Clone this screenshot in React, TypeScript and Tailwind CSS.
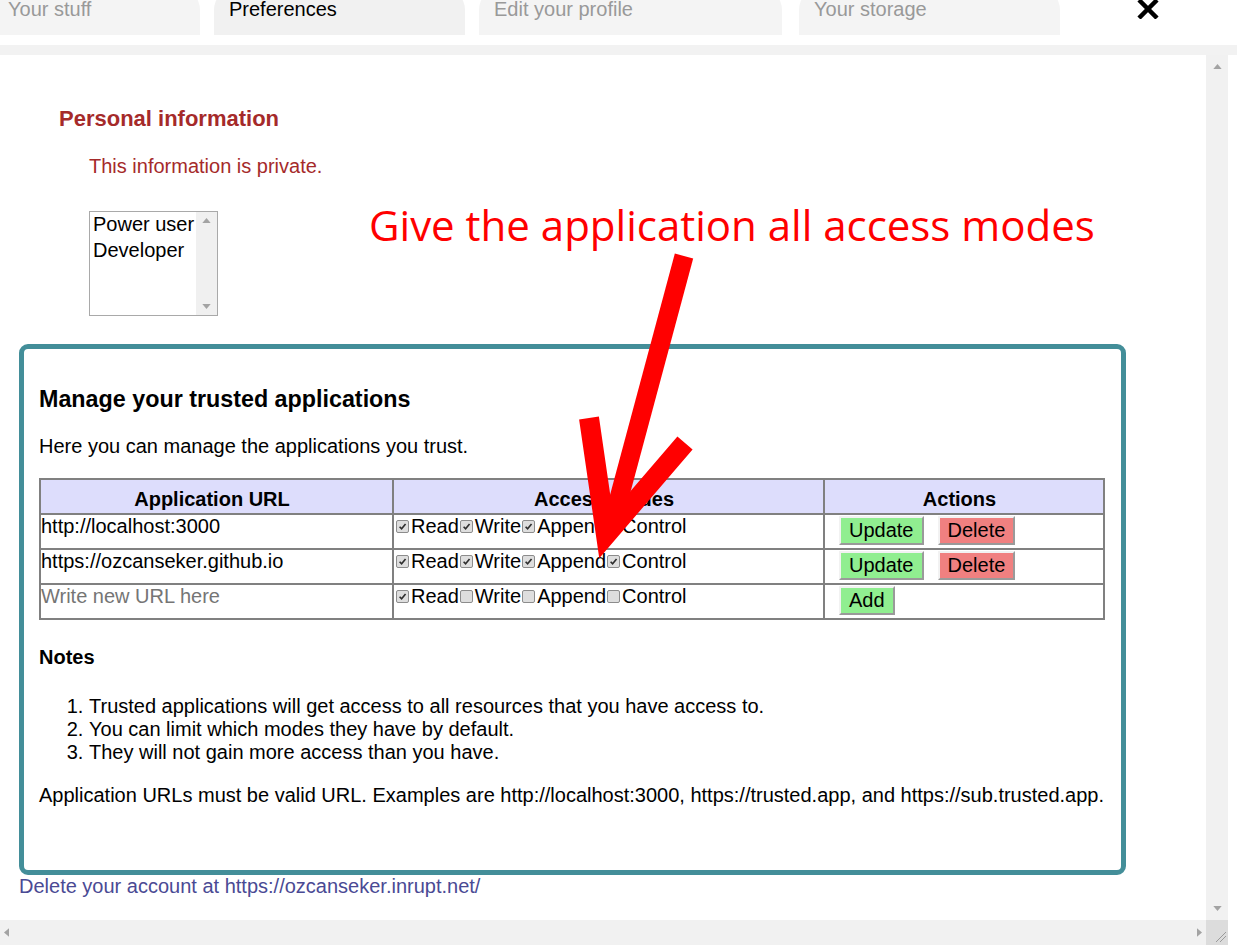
import React from 'react';

const font = { fontFamily: '"Liberation Sans", Arial, sans-serif' };

function Check({ on }: { on: boolean }) {
    return (
        <span className="mr-[2px] inline-flex h-[13px] w-[13px] shrink-0 items-center justify-center rounded-[2px] border border-[#8c8c8c] bg-[#dedede] align-[1px]">
            {on && (
                <svg viewBox="0 0 10 10" className="h-[9px] w-[9px]">
                    <path d="M1.8 5.2 L4 7.6 L8.4 2.2" fill="none" stroke="#2e2e2e" strokeWidth="1.8" />
                </svg>
            )}
        </span>
    );
}

function Btn({ label, color }: { label: string; color: 'green' | 'red' }) {
    return (
        <button
            className={`h-[29px] border-2 border-t-[#f2f2f2] border-l-[#f2f2f2] border-b-[#9a9a9a] border-r-[#9a9a9a] px-[8px] text-[20px] leading-[23px] text-black ${color === 'green' ? 'bg-[#90ee90]' : 'bg-[#f08080]'}`}
        >
            {label}
        </button>
    );
}

function Modes({ modes }: { modes: boolean[] }) {
    const names = ['Read', 'Write', 'Append', 'Control'];
    return (
        <div className="flex items-center pl-[2px]">
            {names.map((n, i) => (
                <span key={n} className="flex items-center">
                    <Check on={modes[i]} />
                    <span className="mr-[1px]">{n}</span>
                </span>
            ))}
        </div>
    );
}

export default function App() {
    const rows = [
        { url: 'http://localhost:3000', modes: [true, true, true, false], existing: true },
        { url: 'https://ozcanseker.github.io', modes: [true, true, true, true], existing: true },
        { url: '', modes: [true, false, false, false], existing: false },
    ];

    return (
        <div className="relative flex h-[945px] w-[1247px] flex-col overflow-hidden bg-white text-black" style={font}>
            {/* tabs */}
            <div className="flex h-[35px] shrink-0 text-[20px] leading-[23px]">
                <div className="-mt-[12px] ml-[-7px] h-[47px] w-[207px] rounded-t-[22px] bg-[#f4f4f4] pl-[15px] pt-[10px] text-[#999]">Your stuff</div>
                <div className="-mt-[12px] ml-[14px] h-[47px] w-[251px] rounded-t-[22px] bg-[#f1f1f1] pl-[15px] pt-[10px] text-black">Preferences</div>
                <div className="-mt-[12px] ml-[14px] h-[47px] w-[303px] rounded-t-[22px] bg-[#f4f4f4] pl-[15px] pt-[10px] text-[#999]">Edit your profile</div>
                <div className="-mt-[12px] ml-[17px] h-[47px] w-[261px] rounded-t-[22px] bg-[#f4f4f4] pl-[15px] pt-[10px] text-[#999]">Your storage</div>
                <svg viewBox="0 0 24 20" className="ml-[76px] -mt-[1px] h-[20px] w-[24px]">
                    <path d="M3 1 L21 19 M21 1 L3 19" stroke="#000" strokeWidth="4.5" />
                </svg>
            </div>

            <div className="mt-[10px] h-[10px] w-[1237px] shrink-0 bg-[#f2f2f2]" />

            {/* frame */}
            <div className="flex h-[865px] shrink-0">
                <div className="h-full w-[1206px] overflow-hidden text-[20px] leading-[23px]">
                    <h3 className="ml-[59px] mt-[51px] text-[22px] font-bold leading-[25px] text-[#a52a2a]">Personal information</h3>
                    <p className="ml-[89px] mt-[24px] text-[#a52a2a]">This information is private.</p>

                    <div className="ml-[89px] mt-[33px] flex h-[105px] w-[129px] border border-[#a9a9a9]">
                        <div className="flex-1 pl-[3px] leading-[26px]">
                            <div className="-mt-[1px]">Power user</div>
                            <div>Developer</div>
                        </div>
                        <div className="flex w-[21px] flex-col items-center justify-between bg-[#f0f0f0] py-[6px]">
                            <svg viewBox="0 0 10 6" className="h-[5px] w-[9px]"><path d="M0 6 L5 0 L10 6 Z" fill="#a3a3a3" /></svg>
                            <svg viewBox="0 0 10 6" className="h-[5px] w-[9px]"><path d="M0 0 L5 6 L10 0 Z" fill="#a3a3a3" /></svg>
                        </div>
                    </div>

                    <div className="ml-[19px] mt-[28px] h-[531px] w-[1107px] rounded-[9px] border-[5px] border-[#438e99] pl-[15px] pt-[37px]">
                        <h2 className="text-[23.3px] font-bold leading-[26px]">Manage your trusted applications</h2>
                        <p className="mt-[22.5px]">Here you can manage the applications you trust.</p>

                        <div className="mt-[20.5px] w-[1066px] border-2 border-[#808080]">
                            <div className="flex h-[33px] bg-[#ddddfc] font-bold">
                                <div className="flex w-[353px] items-end justify-center border-r-2 border-[#808080] pb-[2px] pr-[9px]">Application URL</div>
                                <div className="flex w-[431px] items-end justify-center border-r-2 border-[#808080] pb-[2px] pr-[9px]">Access modes</div>
                                <div className="flex flex-1 items-end justify-center pb-[2px] pr-[9px]">Actions</div>
                            </div>
                            {rows.map((r, i) => (
                                <div key={i} className="flex h-[35px] border-t-2 border-[#808080]">
                                    <div className="w-[353px] border-r-2 border-[#808080] pl-[0px]">
                                        {r.existing ? r.url : <span className="text-[#757575]">Write new URL here</span>}
                                    </div>
                                    <div className="w-[431px] border-r-2 border-[#808080]">
                                        <Modes modes={r.modes} />
                                    </div>
                                    <div className="flex flex-1 items-start gap-[14px] pl-[14px] pt-[1px]">
                                        {r.existing ? (
                                            <>
                                                <Btn label="Update" color="green" />
                                                <Btn label="Delete" color="red" />
                                            </>
                                        ) : (
                                            <Btn label="Add" color="green" />
                                        )}
                                    </div>
                                </div>
                            ))}
                        </div>

                        <h4 className="mt-[25.5px] font-bold">Notes</h4>
                        <ol className="mt-[26px] list-decimal pl-[50px]">
                            <li>Trusted applications will get access to all resources that you have access to.</li>
                            <li>You can limit which modes they have by default.</li>
                            <li>They will not gain more access than you have.</li>
                        </ol>
                        <p className="mt-[20px]">
                            Application URLs must be valid URL. Examples are http://localhost:3000, https://trusted.app, and https://sub.trusted.app.
                        </p>
                    </div>

                    <p className="ml-[19px] text-[#4a4a94]">Delete your account at https://ozcanseker.inrupt.net/</p>
                </div>

                {/* vertical scrollbar */}
                <div className="flex w-[22px] flex-col items-center justify-between bg-[#f1f1f1] py-[9px]">
                    <svg viewBox="0 0 10 6" className="h-[5px] w-[9px]"><path d="M0 6 L5 0 L10 6 Z" fill="#a3a3a3" /></svg>
                    <svg viewBox="0 0 10 6" className="h-[5px] w-[9px]"><path d="M0 0 L5 6 L10 0 Z" fill="#a3a3a3" /></svg>
                </div>
            </div>

            {/* horizontal scrollbar */}
            <div className="flex h-[25px] shrink-0">
                <div className="flex w-[1206px] items-center justify-between bg-[#f1f1f1] px-[4px]">
                    <svg viewBox="0 0 6 10" className="h-[9px] w-[5px]"><path d="M6 0 L0 5 L6 10 Z" fill="#a3a3a3" /></svg>
                    <svg viewBox="0 0 6 10" className="h-[9px] w-[5px]"><path d="M0 0 L6 5 L0 10 Z" fill="#a3a3a3" /></svg>
                </div>
                <div className="relative w-[22px] bg-[#dcdcdc]">
                    <svg viewBox="0 0 22 25" className="h-[25px] w-[22px]">
                        <path d="M10 22 L20 12 M14 22 L20 16" stroke="#9a9a9a" strokeWidth="1" />
                    </svg>
                </div>
            </div>

            {/* annotation overlay */}
            <div className="pointer-events-none absolute left-[369px] top-[196px] text-[42px] leading-[57px] text-[#ff0000]" style={{ fontFamily: '"Open Sans", sans-serif' }}>
                Give the application all access modes
            </div>
            <svg className="pointer-events-none absolute left-0 top-0" width="1247" height="945">
                <path d="M684 256 L611 528" stroke="#ff0000" strokeWidth="19" fill="none" />
                <path d="M589 418 L606 535 L685 443" stroke="#ff0000" strokeWidth="20" fill="none" strokeLinejoin="miter" strokeMiterlimit="10" />
            </svg>
        </div>
    );
}
